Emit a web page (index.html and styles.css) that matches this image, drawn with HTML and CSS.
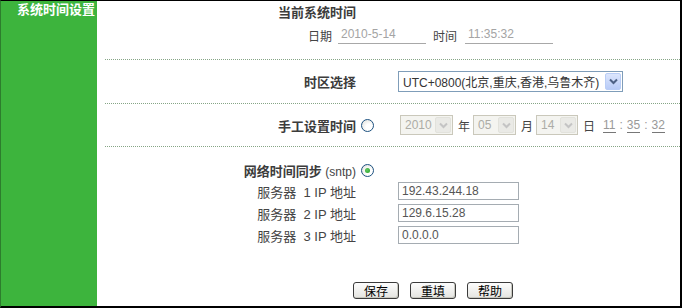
FILE: index.html
```html
<!DOCTYPE html>
<html lang="zh-CN">
<head>
  <meta charset="UTF-8" />
  <title>系统时间设置</title>
  <link rel="stylesheet" href="styles.css">
</head>
<body>
  <div class="page">
    <div class="side">
      <h2>系统时间设置</h2>
    </div>
    <div class="main">
      <div class="sec sec-now">
        <div class="row head">
          <div class="lbl">当前系统时间</div>
        </div>
        <div class="now-line">
          <span>日期</span>
          <span class="line-input date">2010-5-14</span>
          <span class="gap-l">时间</span>
          <span class="line-input time">11:35:32</span>
        </div>
      </div>

      <div class="sec sec-zone">
        <div class="row">
          <div class="lbl">时区选择</div>
          <div class="slot"></div>
          <div class="select zone">
            <span class="sel-text">UTC+0800(北京,重庆,香港,乌鲁木齐)</span>
            <span class="sel-btn">
              <svg width="9" height="7" viewBox="0 0 9 7"><path d="M1 1.5 L4.5 5 L8 1.5" fill="none" stroke="#4d6185" stroke-width="2"/></svg>
            </span>
          </div>
        </div>
      </div>

      <div class="sec sec-manual">
        <div class="row">
          <div class="lbl">手工设置时间</div>
          <div class="slot"><span class="radio"></span></div>
          <div class="vals">
            <div class="select off y">
              <span class="sel-text">2010</span>
              <span class="sel-btn"><svg width="9" height="7" viewBox="0 0 9 7"><path d="M1 1.5 L4.5 5 L8 1.5" fill="none" stroke="#c4c4c4" stroke-width="2"/></svg></span>
            </div>
            <span class="unit">年</span>
            <div class="select off m">
              <span class="sel-text">05</span>
              <span class="sel-btn"><svg width="9" height="7" viewBox="0 0 9 7"><path d="M1 1.5 L4.5 5 L8 1.5" fill="none" stroke="#c4c4c4" stroke-width="2"/></svg></span>
            </div>
            <span class="unit">月</span>
            <div class="select off d">
              <span class="sel-text">14</span>
              <span class="sel-btn"><svg width="9" height="7" viewBox="0 0 9 7"><path d="M1 1.5 L4.5 5 L8 1.5" fill="none" stroke="#c4c4c4" stroke-width="2"/></svg></span>
            </div>
            <span class="unit">日</span>
            <span class="clock">
              <span class="num">11</span><span class="colon">:</span><span class="num">35</span><span class="colon">:</span><span class="num">32</span>
            </span>
          </div>
        </div>
      </div>

      <div class="sec sec-sntp">
        <div class="row sntp-head">
          <div class="lbl">网络时间同步 <span class="sntp">(sntp)</span></div>
          <div class="slot"><span class="radio on"></span></div>
        </div>
        <div class="row server">
          <div class="lbl">服务器&nbsp; 1 IP 地址</div>
          <div class="slot"></div>
          <span class="box-input">192.43.244.18</span>
        </div>
        <div class="row server">
          <div class="lbl">服务器&nbsp; 2 IP 地址</div>
          <div class="slot"></div>
          <span class="box-input">129.6.15.28</span>
        </div>
        <div class="row server">
          <div class="lbl">服务器&nbsp; 3 IP 地址</div>
          <div class="slot"></div>
          <span class="box-input">0.0.0.0</span>
        </div>
        <div class="buttons">
          <button>保存</button>
          <button>重填</button>
          <button>帮助</button>
        </div>
      </div>
    </div>
  </div>
</body>
</html>
```

FILE: styles.css
```css
* { box-sizing: border-box; }

body {
  margin: 0;
  font-family: "Liberation Sans", "Noto Sans CJK SC", sans-serif;
  font-size: 12px;
  color: #444;
  background: #fff;
}

.page {
  display: flex;
  width: 682px;
  height: 308px;
  border-top: 1px solid #000;
  border-right: 2px solid #000;
  border-bottom: 2px solid #000;
  border-left: 1px solid #2d7d2d;
}

.side {
  width: 96px;
  background: #3db43d;
}

.side h2 {
  margin: 0;
  padding: 1px 0 0 16px;
  font-size: 13px;
  line-height: 16px;
  color: #fff;
}

.main {
  flex: 1;
}

.sec {
  border-bottom: 1px dotted #86a586;
  margin-left: 8px;
}

.sec .row {
  margin-left: -8px;
}

.row {
  display: flex;
  align-items: center;
}

.lbl {
  width: 259px;
  text-align: right;
  font-weight: bold;
  font-size: 13px;
  color: #3c3c3c;
  white-space: nowrap;
}

.slot {
  width: 42px;
  padding-left: 5px;
  display: flex;
  align-items: center;
}

/* current time */
.sec-now {
  height: 59px;
  padding-top: 2px;
}

.sec-now .head {
  height: 16px;
}

.now-line {
  display: flex;
  align-items: flex-end;
  height: 18px;
  margin-top: 7px;
  padding-left: 203px;
  color: #444;
}

.line-input {
  display: inline-block;
  width: 88px;
  height: 18px;
  line-height: 16px;
  padding-left: 3px;
  border-bottom: 1px solid #a8a8a8;
  color: #a4a4a4;
  margin-left: 6px;
}

.line-input.time {
  margin-left: 8px;
}

.gap-l {
  margin-left: 7px;
}

/* time zone */
.sec-zone {
  height: 44px;
  display: flex;
  align-items: center;
}

.select {
  display: flex;
  align-items: center;
  justify-content: space-between;
  height: 21px;
  border: 1px solid #7f9db9;
  background: #fff;
  padding: 1px;
}

.select.zone {
  width: 225px;
}

.sel-text {
  padding-left: 3px;
  color: #333;
  white-space: nowrap;
}

.sel-btn {
  width: 16px;
  height: 17px;
  display: flex;
  align-items: center;
  justify-content: center;
  border: 1px solid #b9cdf6;
  border-radius: 2px;
  background: linear-gradient(#dce6fd, #b8cbf7);
}

/* manual time */
.sec-manual {
  height: 43px;
  display: flex;
  align-items: center;
}

.vals {
  display: flex;
  align-items: center;
  margin-left: 2px;
}

.select.off {
  height: 20px;
  border-color: #cac8bb;
  background: #f4f4f0;
}

.select.off .sel-text {
  color: #acaca6;
}

.select.off .sel-btn {
  height: 16px;
  border-color: #e2e2dc;
  background: #eaeae6;
}

.select.y { width: 53px; }
.select.m { width: 43px; }
.select.d { width: 42px; }

.unit {
  margin: 0 3px 0 5px;
  font-size: 12px;
  color: #444;
}

.clock {
  margin-left: 5px;
  color: #999;
}

.clock .num {
  display: inline-block;
  border-bottom: 1px solid #777;
  line-height: 14px;
}

.clock .colon {
  margin: 0 4px;
}

.radio {
  display: inline-block;
  width: 13px;
  height: 13px;
  border-radius: 50%;
  border: 1px solid #1c5180;
  background: radial-gradient(circle at 65% 65%, #fff 30%, #dcdcd6 100%);
  position: relative;
}

.radio.on::after {
  content: "";
  position: absolute;
  left: 3px;
  top: 3px;
  width: 5px;
  height: 5px;
  border-radius: 50%;
  background: radial-gradient(circle at 40% 40%, #64c864, #21a121);
}

/* sntp */
.sec-sntp {
  border-bottom: none;
  padding-top: 13px;
}

.sntp-head {
  height: 20px;
}

.sntp {
  font-size: 12px;
  font-weight: normal;
  color: #444;
}

.server {
  height: 22px;
}

.server .lbl {
  font-weight: normal;
  font-size: 13px;
  color: #444;
}

.box-input {
  display: inline-block;
  width: 121px;
  height: 18px;
  line-height: 16px;
  padding-left: 3px;
  border: 1px solid #a5acb2;
  color: #555;
}

.buttons {
  display: flex;
  gap: 11px;
  margin-top: 36px;
  padding-left: 248px;
}

.buttons button {
  width: 46px;
  height: 17px;
  padding: 0;
  font-family: "Noto Sans CJK SC", sans-serif;
  font-size: 12px;
  line-height: 15px;
  color: #000;
  border: 1px solid #3b3b3b;
  border-radius: 3px;
  background: linear-gradient(#fdfdfd, #e4e4e0);
  box-shadow: inset -1px -1px 0 #c8c8c0;
}
```
